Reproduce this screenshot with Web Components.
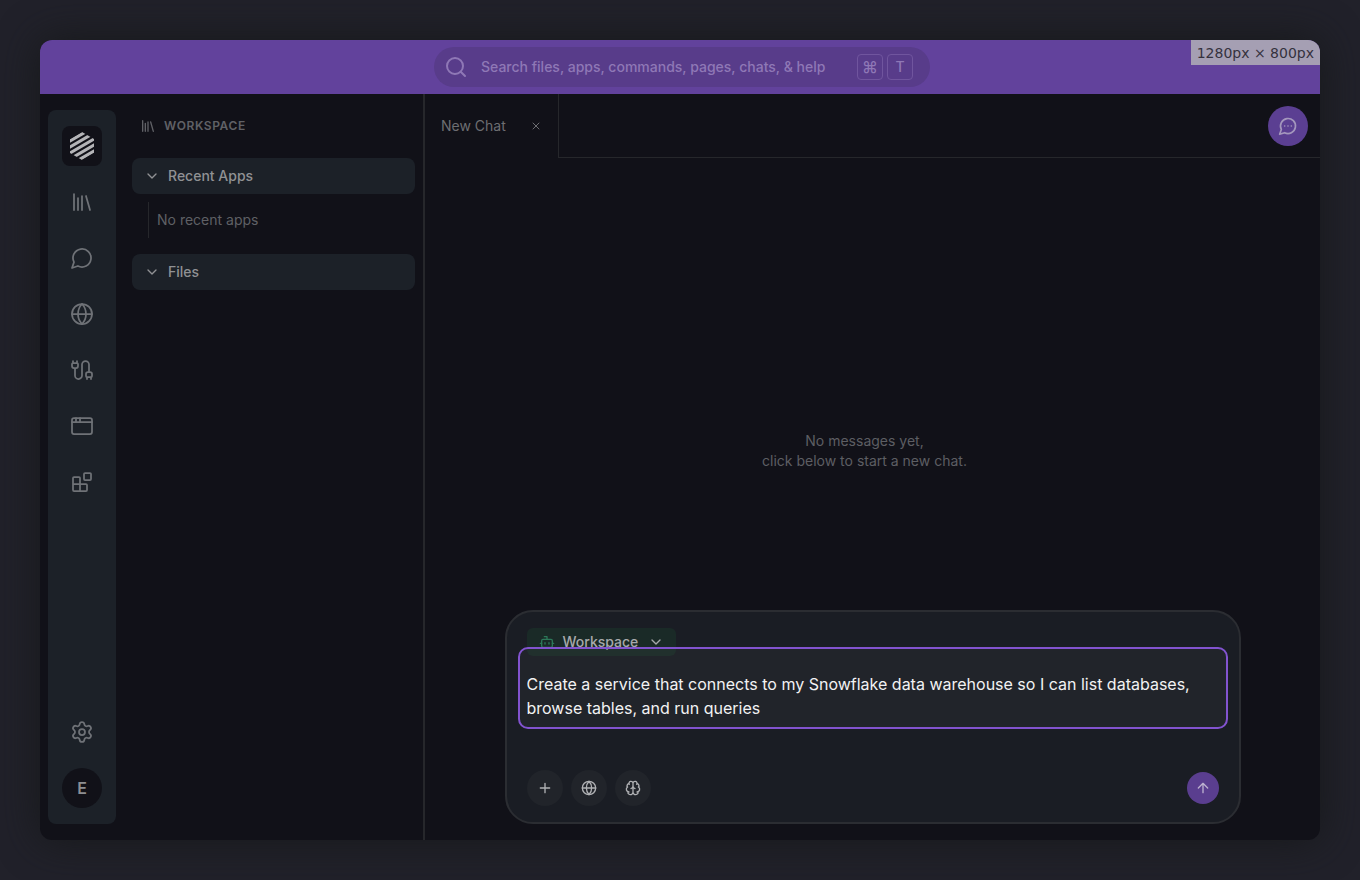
<!DOCTYPE html>
<html lang="en">
<head>
<meta charset="utf-8">
<title>Workspace</title>
<style>
  html, body { margin: 0; }
  body {
    font-family: Inter, "Liberation Sans", sans-serif;
    font-size: 14px;
    line-height: 20px;
    color: #6b6c72;
    background: #21212a;
    --surface: #111118;
    --raised: #1c2128;
    --line: #26272b;
    --purple: #62429c;
  }
</style>
</head>
<body>
<app-window>
  <search-bar slot="top"></search-bar>
  <size-badge slot="badge">1280px × 800px</size-badge>
  <nav-rail></nav-rail>
  <side-panel heading="Workspace">
    <panel-section heading="Recent Apps">No recent apps</panel-section>
    <panel-section heading="Files"></panel-section>
  </side-panel>
  <chat-pane>
    <chat-tab slot="tab">New Chat</chat-tab>
    <empty-state>No messages yet,<br>click below to start a new chat.</empty-state>
    <chat-composer slot="composer"></chat-composer>
  </chat-pane>
</app-window>

<script>
const ICONS = {
  library: '<path d="m16 6 4 14M12 6v14M8 8v12M4 4v16"/>',
  chat: '<path d="M7.9 20A9 9 0 1 0 4 16.1L2 22Z"/>',
  chatMore: '<path d="M7.9 20A9 9 0 1 0 4 16.1L2 22ZM8 12h.01M12 12h.01M16 12h.01"/>',
  globe: '<circle cx="12" cy="12" r="10"/><path d="M12 2a14.5 14.5 0 0 0 0 20 14.5 14.5 0 0 0 0-20M2 12h20"/>',
  cable: '<path d="M17 19a1 1 0 0 1-1-1v-2a2 2 0 0 1 2-2h2a2 2 0 0 1 2 2v2a1 1 0 0 1-1 1zM17 21v-2M19 14V6.5a1 1 0 0 0-7 0v11a1 1 0 0 1-7 0V10M21 21v-2M3 5V3M4 10a2 2 0 0 1-2-2V6a1 1 0 0 1 1-1h4a1 1 0 0 1 1 1v2a2 2 0 0 1-2 2zM7 5V3"/>',
  browser: '<rect x="2" y="4" width="20" height="16" rx="2"/><path d="M10 4v4M2 8h20M6 4v4"/>',
  blocks: '<rect x="14" y="3" width="7" height="7" rx="1"/><path d="M10 21V8a1 1 0 0 0-1-1H4a1 1 0 0 0-1 1v12a1 1 0 0 0 1 1h12a1 1 0 0 0 1-1v-5a1 1 0 0 0-1-1H3"/>',
  gear: '<path d="M9.671 4.136a2.34 2.34 0 0 1 4.659 0 2.34 2.34 0 0 0 3.319 1.915 2.34 2.34 0 0 1 2.33 4.033 2.34 2.34 0 0 0 0 3.831 2.34 2.34 0 0 1-2.33 4.033 2.34 2.34 0 0 0-3.319 1.915 2.34 2.34 0 0 1-4.659 0 2.34 2.34 0 0 0-3.32-1.915 2.34 2.34 0 0 1-2.33-4.033 2.34 2.34 0 0 0 0-3.831A2.34 2.34 0 0 1 6.35 6.051a2.34 2.34 0 0 0 3.319-1.915"/><circle cx="12" cy="12" r="3"/>',
  search: '<circle cx="11" cy="11" r="8"/><path d="m21 21-4.3-4.3"/>',
  chevron: '<path d="m6 9 6 6 6-6"/>',
  close: '<path d="M18 6 6 18M6 6l12 12"/>',
  bot: '<path d="M12 8V4H8M2 14h2M20 14h2M15 13v2M9 13v2"/><rect x="4" y="8" width="16" height="12" rx="2"/>',
  plus: '<path d="M5 12h14M12 5v14"/>',
  brain: '<path d="M12 18V5M15 13a4.17 4.17 0 0 1-3-4 4.17 4.17 0 0 1-3 4M17.598 6.5A3 3 0 1 0 12 5a3 3 0 1 0-5.598 1.5M17.997 5.125a4 4 0 0 1 2.526 5.77M18 18a4 4 0 0 0 2-7.464M19.967 17.483A4 4 0 1 1 12 18a4 4 0 1 1-7.967-.517M6 18a4 4 0 0 1-2-7.464M6.003 5.125a4 4 0 0 0-2.526 5.77"/>',
  arrowUp: '<path d="m5 12 7-7 7 7M12 19V5"/>',
};

function define(name, html) {
  customElements.define(name, class extends HTMLElement {
    constructor() {
      super();
      const root = this.attachShadow({ mode: 'open' });
      root.innerHTML = html;
      root.querySelectorAll('[data-attr]').forEach(n => {
        n.textContent = this.getAttribute(n.dataset.attr);
      });
    }
  });
}

const RESET = `
  *, *::before { box-sizing: border-box; }
  button, input, textarea { font: inherit; color: inherit; background: none; border: 0; padding: 0; margin: 0; }
  button { display: inline-flex; align-items: center; justify-content: center; cursor: pointer; }
`;

customElements.define('ui-icon', class extends HTMLElement {
  connectedCallback() {
    if (this.shadowRoot) return;
    const size = this.getAttribute('size') || 24;
    const stroke = this.getAttribute('stroke') || 2;
    this.attachShadow({ mode: 'open' }).innerHTML = `
      <style>:host { display: inline-flex; flex: none; } svg { display: block; }</style>
      <svg width="${size}" height="${size}" viewBox="0 0 24 24" fill="none" stroke="currentColor"
        stroke-width="${stroke}" stroke-linecap="round" stroke-linejoin="round" aria-hidden="true">${ICONS[this.getAttribute('name')]}</svg>`;
  }
});

define('app-window', `
  <style>${RESET}
    :host {
      display: flex; flex-direction: column; position: relative; box-sizing: border-box;
      margin: 40px; min-height: calc(100vh - 80px);
      border-radius: 12px; background: var(--surface);
      box-shadow: 0 0 40px #17191a;
    }
    header { display: flex; justify-content: center; padding: 7px 0 7px 4px; background: var(--purple); border-radius: 12px 12px 0 0; }
    .body { flex: 1; display: flex; }
    ::slotted(nav-rail) { margin: 16px 8px; }
    ::slotted(chat-pane) { flex: 1; min-width: 0; }
  </style>
  <header><slot name="top"></slot></header>
  <slot name="badge"></slot>
  <div class="body"><slot></slot></div>`);

define('size-badge', `
  <style>
    :host {
      position: absolute; top: 0; right: 0; padding: 3px 6px 2px;
      font: 14px/20px "DejaVu Sans", sans-serif; color: #35323e;
      background: #a59fb3; border-top-right-radius: 12px;
    }
  </style><slot></slot>`);

define('search-bar', `
  <style>${RESET}
    :host { display: block; width: 496px; max-width: 100%; color: #8f78b6; }
    label { display: flex; align-items: center; height: 40px; padding: 0 17px 0 10px; border-radius: 20px; background: #583c8a; }
    input { flex: 1; min-width: 0; margin-left: 13px; outline: none; font-weight: 500; }
    input::placeholder { color: inherit; opacity: 1; }
    kbd {
      display: flex; align-items: center; justify-content: center; width: 26px; height: 26px; margin-left: 4px;
      border: 1px solid #70559e; border-radius: 4px; font: 500 14px/20px Inter, sans-serif;
    }
    .cmd { font-size: 16px; }
  </style>
  <label><ui-icon name="search"></ui-icon>
    <input type="search" aria-label="Search" placeholder="Search files, apps, commands, pages, chats, &amp; help">
    <kbd class="cmd">⌘</kbd><kbd>T</kbd>
  </label>`);

define('nav-rail', `
  <style>${RESET}
    :host { display: block; }
    nav { display: flex; flex-direction: column; align-items: center; gap: 16px; width: 68px; height: 100%; padding: 16px 0; border-radius: 8px; background: var(--raised); color: #6f7277; }
    button { width: 40px; height: 40px; border-radius: 8px; }
    .logo { background: var(--surface); color: #b4b4b7; }
    .gear { margin-top: auto; }
    .avatar { border-radius: 50%; background: var(--surface); color: #8d8e92; font-size: 16px; font-weight: 600; }
  </style>
  <nav aria-label="Main">
    <button class="logo" aria-label="Home">
      <svg width="24" height="28" viewBox="0 0 24 28" aria-hidden="true">
        <clipPath id="hex"><path d="M12 0 24 7v14l-12 7L0 21V7z"/></clipPath>
        <g clip-path="url(#hex)" stroke="currentColor" stroke-width="3.2" fill="none">
          <path d="M-2 10.17 26-6.17M-2 16.17 26-.17M-2 22.17 26 5.83M-2 28.17 26 11.83M-2 34.17 26 17.83"/>
        </g>
      </svg>
    </button>
    <button aria-label="Workspace"><ui-icon name="library" stroke="1.75"></ui-icon></button>
    <button aria-label="Chats"><ui-icon name="chat" stroke="1.75"></ui-icon></button>
    <button aria-label="Web"><ui-icon name="globe" stroke="1.75"></ui-icon></button>
    <button aria-label="Connections"><ui-icon name="cable" stroke="1.75"></ui-icon></button>
    <button aria-label="Windows"><ui-icon name="browser" stroke="1.75"></ui-icon></button>
    <button aria-label="Apps"><ui-icon name="blocks" stroke="1.75"></ui-icon></button>
    <button class="gear" aria-label="Settings"><ui-icon name="gear" stroke="1.75"></ui-icon></button>
    <button class="avatar" aria-label="Account">E</button>
  </nav>`);

define('side-panel', `
  <style>
    :host { display: block; box-sizing: border-box; width: 301px; padding: 16px 8px; border-right: 2px solid var(--line); }
    h2 { display: flex; align-items: center; gap: 8px; height: 32px; margin: 0 0 16px; padding-left: 8px; font-size: 12px; line-height: 16px; font-weight: 600; letter-spacing: 0.6px; text-transform: uppercase; color: #606166; }
    section { display: grid; gap: 16px; }
  </style>
  <h2><ui-icon name="library" size="16"></ui-icon><span data-attr="heading"></span></h2>
  <section><slot></slot></section>`);

define('panel-section', `
  <style>${RESET}
    :host { display: block; }
    button { justify-content: flex-start; gap: 8px; width: 100%; height: 36px; padding: 0 12px; border-radius: 8px; background: var(--raised); color: #909194; font-weight: 500; }
    .content { margin: 8px 0 0 16px; padding: 8px; border-left: 1px solid var(--line); color: #5f6065; }
    :host([heading="Files"]) .content { display: none; }
  </style>
  <button aria-expanded="true"><ui-icon name="chevron" size="16"></ui-icon><span data-attr="heading"></span></button>
  <div class="content"><slot></slot></div>`);

define('chat-pane', `
  <style>${RESET}
    :host { display: flex; flex-direction: column; }
    .tabs { display: flex; height: 64px; }
    .rest { flex: 1; display: flex; align-items: center; justify-content: flex-end; padding-right: 12px; border-bottom: 1px solid var(--line); }
    .rest button { width: 40px; height: 40px; border-radius: 50%; background: #5b3f92; color: #a497bd; }
    .messages { flex: 1; display: flex; align-items: center; justify-content: center; min-height: 160px; padding: 134px 16px 0 0; }
    .foot { padding: 0 16px 16px; }
  </style>
  <div class="tabs"><slot name="tab"></slot>
    <div class="rest"><button aria-label="Start chat"><ui-icon name="chatMore" size="20"></ui-icon></button></div>
  </div>
  <div class="messages"><slot></slot></div>
  <div class="foot"><slot name="composer"></slot></div>`);

define('chat-tab', `
  <style>${RESET}
    :host { display: flex; align-items: center; box-sizing: border-box; width: 134px; padding: 0 16px; border-right: 1px solid var(--line); color: #6d6e72; white-space: nowrap; }
    span { flex: 1; }
  </style>
  <span><slot></slot></span><button aria-label="Close tab"><ui-icon name="close" size="12"></ui-icon></button>`);

define('empty-state', `
  <style>:host { display: block; text-align: center; color: #5d5e63; }</style><slot></slot>`);

define('chat-composer', `
  <style>${RESET}
    :host { display: block; box-sizing: border-box; max-width: 736px; margin: 0 auto; padding: 16px 20px; border: 2px solid #2b2d32; border-radius: 28px; background: #1a1d24; }
    .scope { display: flex; gap: 8px; width: 149px; height: 28px; padding: 0 12px; border-radius: 6px; background: #1a2a27; color: #a7a9ab; font-weight: 500; }
    .scope .bot { color: #2c7859; }
    .scope span { flex: 1; text-align: left; }
    .prompt { position: relative; display: flex; margin: -9px -9px 41px; }
    textarea { flex: 1; height: 82px; padding: 23px 7px 7px; border: 2px solid #8253cf; border-radius: 10px; outline: none; resize: none; overflow: hidden; font-size: 16px; line-height: 24px; color: #f2f2f3; background: rgb(255 255 255 / 3%); }
    .actions { display: flex; align-items: center; gap: 8px; color: #b0b1b4; }
    .actions button { width: 36px; height: 36px; border-radius: 50%; background: #21242a; }
    .actions .send { width: 32px; height: 32px; margin-left: auto; background: #5a3e8f; }
    .send { color: #bcb1cf; }
  </style>
  <button class="scope"><ui-icon class="bot" name="bot" size="16"></ui-icon><span>Workspace</span><ui-icon name="chevron" size="16"></ui-icon></button>
  <div class="prompt"><textarea aria-label="Message">Create a service that connects to my Snowflake data warehouse so I can list databases, browse tables, and run queries</textarea></div>
  <div class="actions">
    <button aria-label="Add"><ui-icon name="plus" size="16"></ui-icon></button>
    <button aria-label="Search the web"><ui-icon name="globe" size="16"></ui-icon></button>
    <button aria-label="Reasoning"><ui-icon name="brain" size="16"></ui-icon></button>
    <button class="send" aria-label="Send"><ui-icon name="arrowUp" size="16"></ui-icon></button>
  </div>`);
</script>
</body>
</html>
